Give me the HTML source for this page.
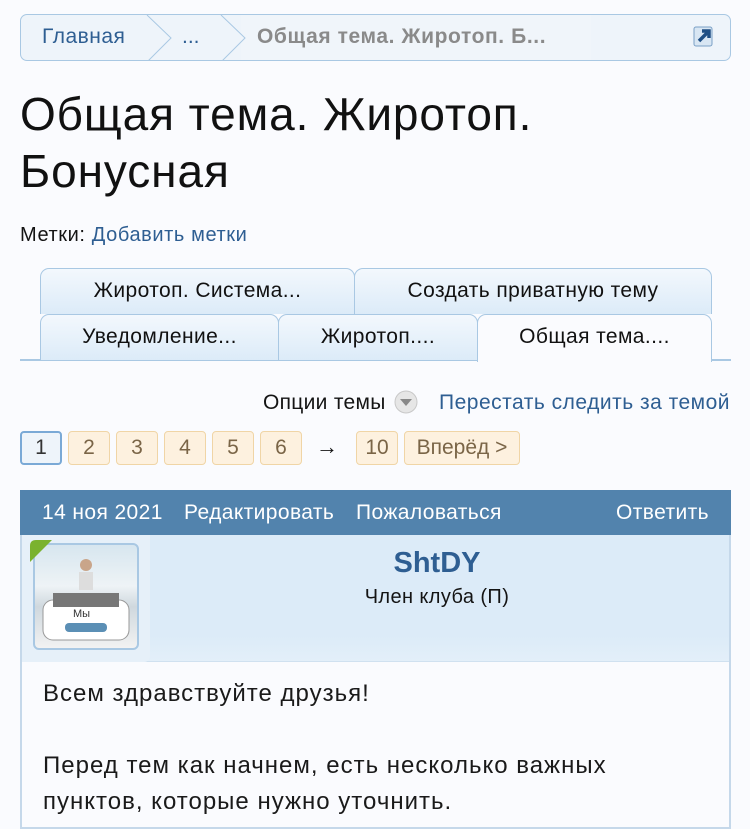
<!DOCTYPE html>
<html><head><meta charset="utf-8"><style>
*{margin:0;padding:0;box-sizing:border-box}
body{width:750px;height:829px;overflow:hidden;background:#fafbfe;font-family:"Liberation Sans","DejaVu Sans",sans-serif;color:#141414;position:relative}
.a{position:absolute;white-space:nowrap}
.bc{left:20px;top:14px;width:711px;height:47px;border:1px solid #a9c8e3;border-radius:7px;background:#eef4fa;overflow:hidden}
.bc .cur{position:absolute;left:220px;top:0;width:350px;height:45px;background:#f0f5fa}
.tab{position:absolute;height:46px;border:1px solid #a9c8e3;border-bottom:none;border-radius:9px 9px 0 0;background:linear-gradient(#f3f8fd,#dcebf8);font-size:21px;letter-spacing:0.4px;text-align:center;line-height:44px;color:#111}
.pg{position:absolute;top:431px;height:34px;border:1px solid #f0d5a6;border-radius:4px;background:#fdf1df;color:#7a6547;font-size:21px;text-align:center;line-height:32px}
</style></head><body>
<div class="a bc"><div class="cur"></div>
<svg style="position:absolute;left:0;top:0" width="711" height="47"><path d="M126 0 L150 23 L126 47 M200 0 L224 23 L200 47" stroke="#a9c8e3" fill="none"/></svg>
<span class="a" style="left:21px;top:10px;font-size:21px;letter-spacing:0.5px;color:#2e5e92">Главная</span>
<span class="a" style="left:161px;top:10px;font-size:21px;color:#2e5e92">...</span>
<span class="a" style="left:236px;top:10px;font-size:21px;letter-spacing:0.6px;color:#8a8a8a;font-weight:bold">Общая тема. Жиротоп. Б...</span>
<svg style="position:absolute;left:670px;top:9px" width="26" height="26"><rect x="3" y="3" width="18" height="19" rx="2" fill="#d8e6f3" stroke="#7aa0c6"/><path d="M8 17 L17 8 M11 7 H18 V14" stroke="#1f4f85" stroke-width="3.5" fill="none"/></svg>
</div>
<div class="a" style="left:20px;top:86px;font-size:46px;letter-spacing:0.9px;line-height:57px;color:#111">Общая тема. Жиротоп.<br>Бонусная</div>
<div class="a" style="left:20px;top:224px;font-size:20px;letter-spacing:0.6px">Метки: <span style="color:#2e5e92">Добавить метки</span></div>
<div class="a" style="left:20px;top:359px;width:711px;height:2px;background:#a9c8e3"></div>
<div class="tab" style="left:40px;top:268px;width:315px">Жиротоп. Система...</div>
<div class="tab" style="left:354px;top:268px;width:358px">Создать приватную тему</div>
<div class="tab" style="left:40px;top:314px;width:239px">Уведомление...</div>
<div class="tab" style="left:278px;top:314px;width:200px">Жиротоп....</div>
<div class="tab" style="left:477px;top:314px;width:235px;height:48px;background:#fafbfe">Общая тема....</div>
<div class="a" style="left:263px;top:391px;font-size:21px;letter-spacing:0.3px">Опции темы</div>
<svg class="a" style="left:394px;top:390px" width="26" height="26"><circle cx="12" cy="12" r="11" fill="#e6e6e6" stroke="#c8c8c8"/><path d="M6 9 L18 9 L12 16Z" fill="#888"/></svg>
<div class="a" style="left:439px;top:391px;font-size:21px;letter-spacing:0.5px;color:#2e5e92">Перестать следить за темой</div>
<div class="pg" style="left:20px;width:42px;border:2px solid #7aa9d6;background:#eef4fa;color:#333;line-height:30px">1</div>
<div class="pg" style="left:68px;width:42px">2</div>
<div class="pg" style="left:116px;width:42px">3</div>
<div class="pg" style="left:164px;width:42px">4</div>
<div class="pg" style="left:212px;width:42px">5</div>
<div class="pg" style="left:260px;width:42px">6</div>
<div class="a" style="left:316px;top:434px;font-size:22px">→</div>
<div class="pg" style="left:356px;width:42px">10</div>
<div class="pg" style="left:404px;width:116px">Вперёд &gt;</div>
<div class="a" style="left:20px;top:490px;width:711px;height:339px;border:2px solid #c5d8ea;border-top:none;background:#fafbfe"></div>
<div class="a" style="left:20px;top:490px;width:711px;height:45px;background:#5283ad;color:#fff;font-size:21px;letter-spacing:0.4px">
<span class="a" style="left:22px;top:11px">14 ноя 2021</span>
<span class="a" style="left:164px;top:11px">Редактировать</span>
<span class="a" style="left:336px;top:11px">Пожаловаться</span>
<span class="a" style="right:22px;top:11px">Ответить</span></div>
<div class="a" style="left:22px;top:535px;width:707px;height:127px;background:linear-gradient(#dcebf8 80%,#e3eff9);border-bottom:1px solid #d0e1f0"></div>
<div class="a" style="left:22px;top:535px;width:128px;height:127px;background:#e6f0f9;border-radius:0 0 6px 0"></div>
<div class="a" style="left:33px;top:543px;width:106px;height:107px;border:2px solid #a9c8e3;border-radius:6px;background:linear-gradient(#d7e6ef,#eef3f6 40%,#cfd8de 60%,#f2f2f2);overflow:hidden">
<svg width="102" height="103"><rect x="8" y="55" width="86" height="40" rx="10" fill="#fff" stroke="#999"/><rect x="18" y="48" width="66" height="14" fill="#777"/><rect x="30" y="78" width="42" height="9" rx="4" fill="#5b8fb5"/><circle cx="51" cy="20" r="6" fill="#c9a58a"/><rect x="44" y="27" width="14" height="18" fill="#ddd"/><text x="38" y="72" font-size="11" fill="#333" font-family="Liberation Sans">Мы</text></svg></div>
<svg class="a" style="left:30px;top:540px" width="22" height="22"><path d="M0 6 Q0 0 6 0 H22 L0 22Z" fill="#7ab22e"/></svg>
<div class="a" style="width:750px;left:0;padding-left:124px;text-align:center;top:547px;font-size:29px;font-weight:bold;color:#2e5e92">ShtDY</div>
<div class="a" style="left:0;width:750px;padding-left:124px;text-align:center;top:586px;font-size:20px;letter-spacing:0.4px">Член клуба (П)</div>
<div class="a" style="left:43px;top:676px;font-size:24px;letter-spacing:1px;line-height:36px;color:#1a1a1a">Всем здравствуйте друзья!<br><br>Перед тем как начнем, есть несколько важных<br>пунктов, которые нужно уточнить.</div>
</body></html>
